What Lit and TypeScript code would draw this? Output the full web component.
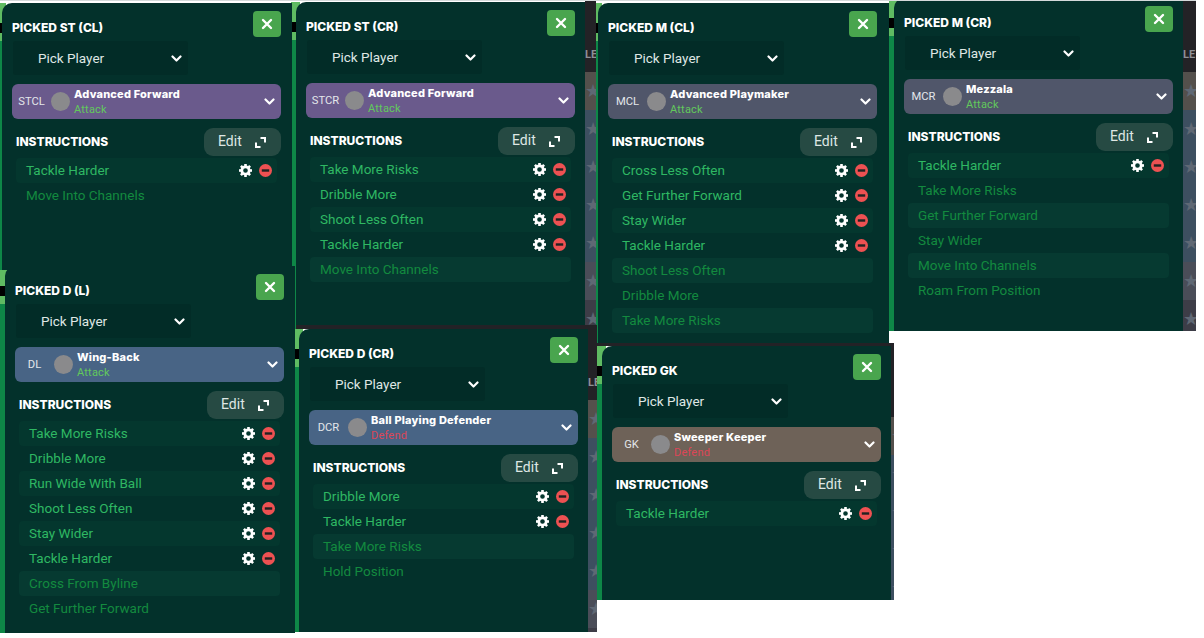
import { LitElement, css, html, svg } from 'lit';
import { customElement } from 'lit/decorators.js';

interface Instruction {
  name: string;
  on: boolean;
}

interface Shot {
  title: string;
  slot: string;
  role: string;
  duty: 'Attack' | 'Defend';
  tone: 'purple' | 'grey' | 'blue' | 'brown';
  x: number;
  y: number;
  w: number;
  h: number;
  edge: number;
  list: Instruction[];
}

const on = (name: string): Instruction => ({ name, on: true });
const off = (name: string): Instruction => ({ name, on: false });

const stCl: Shot = { title: 'PICKED ST (CL)', slot: 'STCL', role: 'Advanced Forward', duty: 'Attack', tone: 'purple', x: 2, y: 3, w: 290, h: 267, edge: 5, list: [on('Tackle Harder'), off('Move Into Channels')] };
const stCr: Shot = { title: 'PICKED ST (CR)', slot: 'STCR', role: 'Advanced Forward', duty: 'Attack', tone: 'purple', x: 296, y: 2, w: 289, h: 327, edge: 5, list: [on('Take More Risks'), on('Dribble More'), on('Shoot Less Often'), on('Tackle Harder'), off('Move Into Channels')] };
const mCl: Shot = { title: 'PICKED M (CL)', slot: 'MCL', role: 'Advanced Playmaker', duty: 'Attack', tone: 'grey', x: 598, y: 3, w: 291, h: 340, edge: 2, list: [on('Cross Less Often'), on('Get Further Forward'), on('Stay Wider'), on('Tackle Harder'), off('Shoot Less Often'), off('Dribble More'), off('Take More Risks')] };
const mCr: Shot = { title: 'PICKED M (CR)', slot: 'MCR', role: 'Mezzala', duty: 'Attack', tone: 'grey', x: 894, y: -2, w: 289, h: 333, edge: 5, list: [on('Tackle Harder'), off('Take More Risks'), off('Get Further Forward'), off('Stay Wider'), off('Move Into Channels'), off('Roam From Position')] };
const dL: Shot = { title: 'PICKED D (L)', slot: 'DL', role: 'Wing-Back', duty: 'Attack', tone: 'blue', x: 5, y: 266, w: 290, h: 367, edge: 5, list: [on('Take More Risks'), on('Dribble More'), on('Run Wide With Ball'), on('Shoot Less Often'), on('Stay Wider'), on('Tackle Harder'), off('Cross From Byline'), off('Get Further Forward')] };
const dCr: Shot = { title: 'PICKED D (CR)', slot: 'DCR', role: 'Ball Playing Defender', duty: 'Defend', tone: 'blue', x: 299, y: 329, w: 289, h: 303, edge: 4, list: [on('Dribble More'), on('Tackle Harder'), off('Take More Risks'), off('Hold Position')] };
const gk: Shot = { title: 'PICKED GK', slot: 'GK', role: 'Sweeper Keeper', duty: 'Defend', tone: 'brown', x: 602, y: 346, w: 289, h: 254, edge: 5, list: [on('Tackle Harder')] };

const chevron = svg`<path d="M1.5 2.5 5.5 6.5 9.5 2.5" fill="none" stroke="#fff" stroke-width="2.2" stroke-linecap="round" stroke-linejoin="round"/>`;
const gear = svg`
  <circle cx="7" cy="7" r="4" fill="none" stroke="#fff" stroke-width="3"/>
  ${[0, 45, 90, 135, 180, 225, 270, 315].map(
    (a) => svg`<rect x="5.6" y="0" width="2.8" height="3" fill="#fff" transform="rotate(${a} 7 7)"/>`
  )}
`;
const bandColours = ['#54504c', '#3d4f60', '#3d4f60', '#3d4f60', '#3d4f60', '#4a4d58', '#3d3d47'];

@customElement('app-root')
export class AppRoot extends LitElement {
  public static override styles = css`
    :host {
      display: block;
      position: relative;
      width: 1204px;
      height: 638px;
      overflow: hidden;
      background: #fff;
      font-family: Roboto, 'Liberation Sans', sans-serif;
    }

    .topline {
      position: absolute;
      left: 0;
      top: 0;
      width: 1196px;
      height: 1px;
      background: #d5dadb;
      z-index: 5;
    }

    .bar {
      position: absolute;
      background: #232226;
    }

    .strip {
      position: absolute;
      display: flex;
      flex-direction: column;
      overflow: hidden;
      background: #3d3d47;
    }

    .strip .head {
      height: 71px;
      flex: none;
      background: #232226;
      color: #8d9096;
      font-size: 11px;
      font-weight: 700;
      line-height: 108px;
      white-space: nowrap;
    }

    .strip .band {
      height: 38px;
      flex: none;
      color: #5f6874;
      font-size: 18px;
      line-height: 38px;
      letter-spacing: 6px;
      white-space: nowrap;
      overflow: hidden;
    }

    .edge {
      position: absolute;
      background: #0e8747;
      overflow: hidden;
    }

    .edge i {
      display: block;
      height: 38px;
      background: linear-gradient(#5fbb62 0 20px, #000 20px 30px, #5fbb62 30px);
    }

    .panel {
      position: absolute;
      box-sizing: border-box;
      padding: 8px 0 0 10px;
      background: #03312b;
      border-top-left-radius: 10px;
      color: #fff;
    }

    .inner {
      width: 269px;
    }

    .head-row {
      display: flex;
      align-items: center;
      justify-content: space-between;
      height: 26px;
    }

    .title {
      font-family: Inter, sans-serif;
      font-size: 12px;
      font-weight: 800;
      margin-top: 6px;
    }

    .close {
      display: flex;
      align-items: center;
      justify-content: center;
      width: 28px;
      height: 26px;
      border-radius: 4px;
      background: #49a54e;
    }

    .pick {
      display: flex;
      align-items: center;
      justify-content: space-between;
      box-sizing: border-box;
      width: 175px;
      height: 34px;
      margin: 4px 0 0 1px;
      padding: 0 6px 0 25px;
      border-radius: 3px;
      background: #022c27;
      color: #dfe7e4;
      font-size: 13.5px;
    }

    .role {
      display: flex;
      align-items: center;
      height: 35px;
      margin-top: 9px;
      border-radius: 6px;
    }

    .role.purple { background: #6a5a8c; }
    .role.grey { background: #50566a; }
    .role.blue { background: #486485; }
    .role.brown { background: #6e6258; }

    .slot {
      width: 39px;
      flex: none;
      text-align: center;
      font-size: 11.2px;
      color: #e3e6ea;
    }

    .dot {
      width: 19px;
      height: 19px;
      flex: none;
      border-radius: 50%;
      background: #8a8a8c;
    }

    .names {
      flex: 1;
      display: flex;
      flex-direction: column;
      margin-left: 4px;
      line-height: 15px;
    }

    .names b {
      font-family: Inter, sans-serif;
      font-size: 11px;
      font-weight: 800;
      letter-spacing: 0.2px;
    }

    .names span {
      font-size: 11px;
      letter-spacing: 0.2px;
    }

    .names .Attack { color: #62c95c; }
    .names .Defend { color: #dc4657; }

    .role svg {
      margin-right: 6px;
    }

    .instr {
      display: flex;
      align-items: center;
      justify-content: space-between;
      height: 28px;
      margin-top: 9px;
      padding-left: 4px;
    }

    .instr > span {
      font-family: Inter, sans-serif;
      font-size: 12px;
      font-weight: 800;
      margin-top: -2px;
    }

    .edit {
      display: flex;
      align-items: center;
      justify-content: space-between;
      box-sizing: border-box;
      width: 77px;
      height: 28px;
      padding: 0 15px 0 14px;
      border-radius: 9px;
      background: #264a43;
      color: #dfe7e4;
      font-size: 14px;
    }

    .edit span {
      margin-top: -2px;
    }

    .list {
      margin: 2px 4px 0 4px;
    }

    .row {
      display: flex;
      align-items: center;
      height: 25px;
      padding: 0 5px 0 10px;
      border-radius: 4px;
      font-size: 13.5px;
    }

    .row.on { color: #2fb863; }
    .row.off { color: #138a3f; }
    .row.on:nth-child(odd) { background: #04372e; }
    .row.off:nth-child(odd) { background: #063a31; }
    .row span { flex: 1; margin-top: -2px; }
    .row svg { flex: none; }
    .row .gear { margin-right: 7px; }
  `;

  private renderStrip(x: number, y: number, w: number, h: number, label: string) {
    return html`<div class="strip" style="left:${x}px;top:${y}px;width:${w}px;height:${h}px">
      <div class="head">${label}</div>
      ${bandColours.map((c) => html`<div class="band" style="background:${c}">★★★</div>`)}
    </div>`;
  }

  private renderPanel(s: Shot) {
    return html`
      <div class="edge" style="left:${s.x - s.edge}px;top:${s.y}px;width:${s.edge + 4}px;height:${s.h}px"><i></i></div>
      <div class="panel" style="left:${s.x}px;top:${s.y}px;width:${s.w}px;height:${s.h}px">
        <div class="inner">
          <div class="head-row">
            <div class="title">${s.title}</div>
            <div class="close">
              <svg width="12" height="12" viewBox="0 0 12 12"><path d="M2 2l8 8M10 2l-8 8" stroke="#fff" stroke-width="2.4" stroke-linecap="round"/></svg>
            </div>
          </div>
          <div class="pick">
            Pick Player
            <svg width="11" height="9" viewBox="0 0 11 9">${chevron}</svg>
          </div>
          <div class="role ${s.tone}">
            <div class="slot">${s.slot}</div>
            <div class="dot"></div>
            <div class="names">
              <b>${s.role}</b>
              <span class=${s.duty}>${s.duty}</span>
            </div>
            <svg width="11" height="9" viewBox="0 0 11 9">${chevron}</svg>
          </div>
          <div class="instr">
            <span>INSTRUCTIONS</span>
            <div class="edit">
              <span>Edit</span>
              <svg width="11" height="11" viewBox="0 0 11 11"><path d="M5.5 1H10v4.5M5.5 10H1V5.5" fill="none" stroke="#fff" stroke-width="2"/></svg>
            </div>
          </div>
          <div class="list">
            ${s.list.map(
              (item) => html`<div class="row ${item.on ? 'on' : 'off'}">
                <span>${item.name}</span>
                ${item.on
                  ? html`<svg class="gear" width="13" height="13" viewBox="0 0 14 14">${gear}</svg>
                      <svg width="13" height="13" viewBox="0 0 13 13"><circle cx="6.5" cy="6.5" r="6.5" fill="#ee5152"/><rect x="2.8" y="5.3" width="7.4" height="2.4" fill="#222"/></svg>`
                  : null}
              </div>`
            )}
          </div>
        </div>
      </div>
    `;
  }

  public override render() {
    return html`
      <div class="topline"></div>
      ${this.renderStrip(585, 1, 11, 324, 'LE')}
      ${this.renderStrip(1183, 1, 13, 330, 'LE .')}
      ${[stCr, mCl, mCr, dL, stCl].map((s) => this.renderPanel(s))}
      <div class="bar" style="left:296px;top:325px;width:301px;height:4px"></div>
      ${this.renderStrip(588, 329, 9, 303, 'LE')}
      ${this.renderPanel(dCr)}
      <div class="bar" style="left:597px;top:343px;width:297px;height:3px"></div>
      ${this.renderStrip(891, 346, 3, 254, '')}
      ${this.renderPanel(gk)}
    `;
  }
}
